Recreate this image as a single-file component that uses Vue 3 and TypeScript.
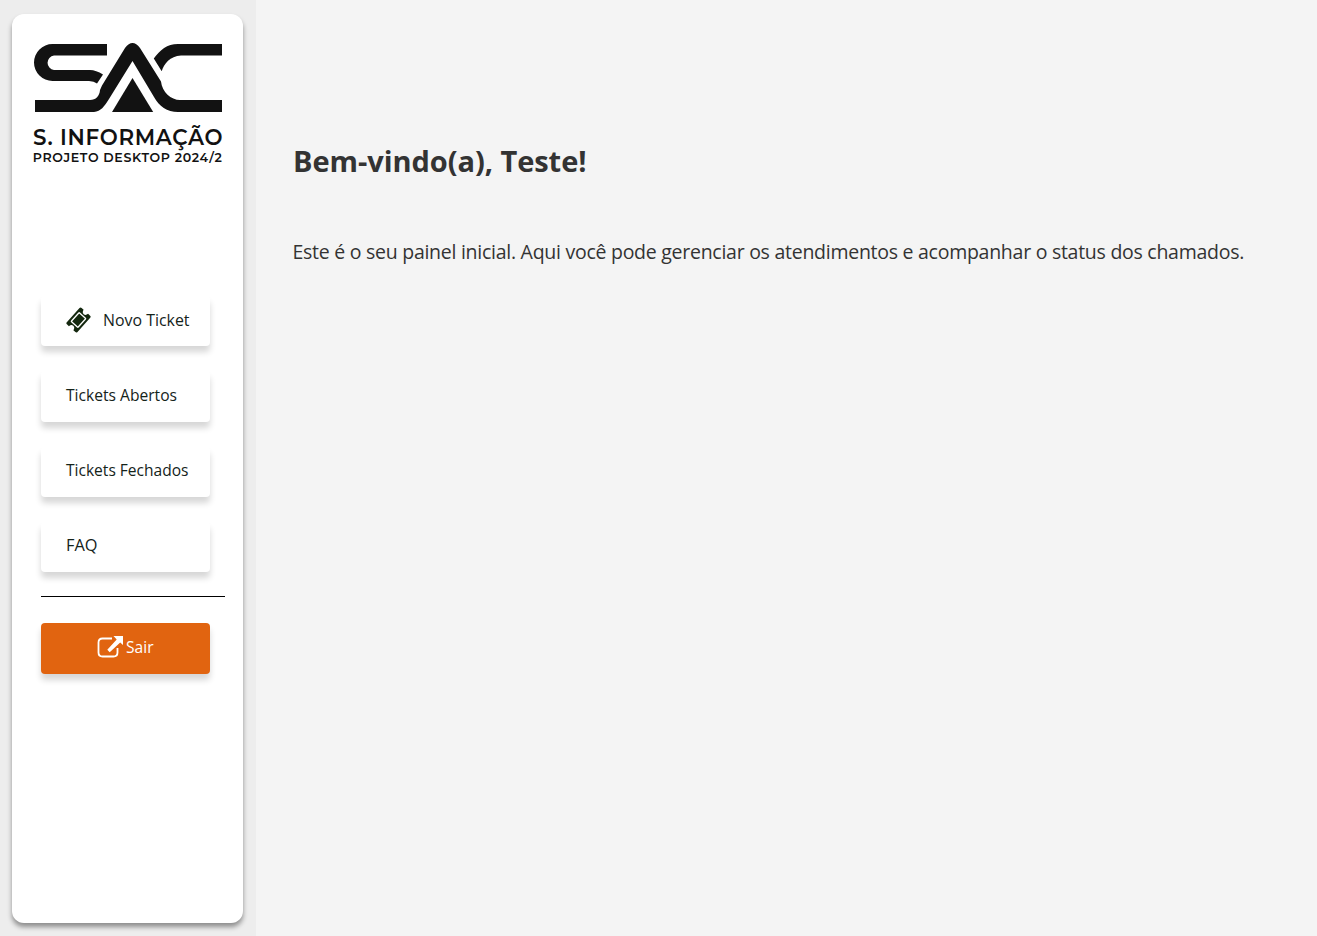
<script setup lang="ts">
interface MenuItem {
  label: string
  icon?: boolean
  width: string
}

const userName: string = 'Teste'
const items: MenuItem[] = [
  { label: 'Novo Ticket', icon: true, width: '86.5' },
  { label: 'Tickets Abertos', width: '111' },
  { label: 'Tickets Fechados', width: '122.5' },
  { label: 'FAQ', width: '31.5' },
]
</script>

<template>
  <div class="page">
    <aside class="side">
      <nav class="card">
        <svg class="logo" viewBox="33 42 190 124" width="190" height="124">
          <g fill="#121212">
            <path d="M107 44H52.5A18.5 18.5 0 0 0 52.5 81H89Q94 81 97 83.5L103 74.5Q96 70 90 70H54A7.3 7.3 0 0 1 54 55.5H107Z" />
            <path d="M35 100H90C96 100 99.5 96 100 90L102 85.5L125 48Q132.500 38 140 48L161 81.500C162 92 171 100 180 100H222V112H178C167 112 159 106 154 97L132.500 61L109 99C104 107 101 111 94 112H35Z" />
            <path d="M132.500 78L153.200 112H112Z" />
            <path d="M222 44V55.500H181C170 56 164 64 161.700 71.200L153.800 58.500C160 50 167 44 178 44Z" />
          </g>
          <text class="logo-title" x="33" y="145" textLength="189.500" lengthAdjust="spacing">S. INFORMAÇÃO</text>
          <text class="logo-sub" x="32.800" y="161.500" textLength="189" lengthAdjust="spacing">PROJETO DESKTOP 2024/2</text>
        </svg>

        <div class="menu">
          <button v-for="item in items" :key="item.label" class="item" type="button">
            <svg v-if="item.icon" class="ticket" viewBox="0 0 26 26" width="26" height="26">
              <g transform="translate(13.500 13) rotate(-48)">
                <path
                  fill="#14280f"
                  d="M-9.500-7.200H9.500Q11-7.200 11-5.700V-3Q7.800-2.500 7.800 0T11 3V5.700Q11 7.200 9.500 7.200H-9.500Q-11 7.200-11 5.700V3Q-7.800 2.500-7.800 0T-11-3V-5.700Q-11-7.200-9.500-7.200Z"
                />
                <rect x="-6" y="-4.500" width="12" height="9" rx="0.600" fill="none" stroke="#fff" stroke-width="1.300" />
              </g>
            </svg>
            <svg class="label" :width="item.width" height="24">
              <text x="0" y="18" :textLength="item.width" lengthAdjust="spacingAndGlyphs">{{ item.label }}</text>
            </svg>
          </button>
        </div>

        <hr class="rule" />

        <button class="exit" type="button">
          <svg viewBox="0 0 26 24" width="26" height="24">
            <path d="M15 3.500H5.500Q1.500 3.500 1.500 7.500V17.500Q1.500 21.500 5.500 21.500H16.500Q20.500 21.500 20.500 17.500V13" fill="none" stroke="#fff" stroke-width="1.800" />
            <path d="M16.500 1H26V10L23.200 7.400L12.700 17.200L10.300 14.800L19.700 4.500Z" fill="#fff" />
          </svg>
          <svg class="label" width="27.500" height="24">
            <text x="0" y="18" textLength="27.500" lengthAdjust="spacingAndGlyphs">Sair</text>
          </svg>
        </button>
      </nav>
    </aside>

    <main class="main">
      <h1>Bem-vindo(a), {{ userName }}!</h1>
      <p>Este é o seu painel inicial. Aqui você pode gerenciar os atendimentos e acompanhar o status dos chamados.</p>
    </main>
  </div>
</template>

<style>
body {
  margin: 0;
  background: #f4f4f4;
}
</style>

<style scoped>
.page {
  display: flex;
  height: 936px;
  overflow: hidden;
  background: #f4f4f4;
  font-family: 'Segoe UI', 'Open Sans', 'Noto Sans', sans-serif;
}
.side {
  box-sizing: border-box;
  width: 256px;
  flex: none;
  padding: 14px 13px 13px 12px;
  background: #ededed;
}
.card {
  box-sizing: border-box;
  height: 909px;
  padding: 28px 18px 0 29px;
  border-radius: 12px;
  background: #fff;
  box-shadow: 0 4px 5px rgba(0, 0, 0, 0.4);
}
.logo {
  display: block;
  margin-left: -8px;
}
.logo-title {
  font: 600 21.400px 'Montserrat', 'Lato', sans-serif;
  fill: #121212;
}
.logo-sub {
  font: 600 12.600px 'Montserrat', 'Lato', sans-serif;
  fill: #121212;
}
.menu {
  display: flex;
  flex-direction: column;
  gap: 25px;
  margin-top: 130px;
}
.item,
.exit {
  box-sizing: border-box;
  display: flex;
  align-items: center;
  width: 169px;
  height: 50.250px;
  margin: 0;
  border: 0;
  border-radius: 4px;
  box-shadow: 0 6px 6px rgba(0, 0, 0, 0.16);
  font-family: inherit;
}
.item {
  padding: 0 0 3px 25px;
  background: #fff;
}
.ticket {
  margin-right: 12px;
  margin-left: -1px;
}
.label {
  display: block;
  overflow: visible;
  font-size: 16px;
  fill: #14231a;
}
.rule {
  width: 184px;
  height: 1px;
  margin: 24px 0 26px;
  border: 0;
  background: #000;
}
.exit {
  justify-content: center;
  gap: 2.500px;
  height: 51px;
  padding: 0 1px 3px 0;
  background: #e16410;
}
.exit .label {
  fill: #fff;
}
.main {
  padding: 140px 0 0 37px;
  color: #333;
}
h1 {
  margin: 0;
  font-size: 29px;
  line-height: 42px;
  font-weight: 700;
  letter-spacing: -0.050px;
  white-space: nowrap;
}
p {
  margin: 54px 0 0 -0.500px;
  font-size: 19.500px;
  line-height: 32px;
  letter-spacing: -0.265px;
  white-space: nowrap;
}
</style>
